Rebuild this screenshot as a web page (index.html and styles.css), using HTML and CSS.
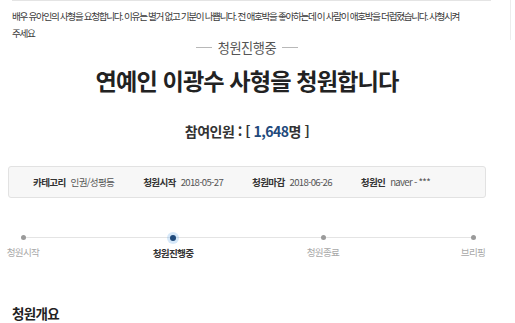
FILE: index.html
```html
<!DOCTYPE html>
<html lang="ko">
<head>
<meta charset="utf-8">
<link rel="stylesheet" href="styles.css">
</head>
<body>
<div class="top">
  <div class="desc">
    <p>배우 유아인의 사형을 요청합니다. 이유는 별거 없고 기분이 나쁩니다. 전 애호박을 좋아하는데 이 사람이 애호박을 더럽혔습니다. 사형시켜</p>
    <p>주세요</p>
  </div>
  <div class="side"></div>
</div>
<div class="main">
  <div class="status"><span class="dash"></span><span>청원진행중</span><span class="dash"></span></div>
  <h1 class="title">연예인 이광수 사형을 청원합니다</h1>
  <div class="count">참여인원 : [ <span class="num">1,648</span>명 ]</div>
  <div class="info">
    <div class="item"><b>카테고리</b><span>인권/성평등</span></div>
    <div class="item"><b>청원시작</b><span>2018-05-27</span></div>
    <div class="item"><b>청원마감</b><span>2018-06-26</span></div>
    <div class="item"><b>청원인</b><span>naver - ***</span></div>
  </div>
  <div class="progress">
    <div class="step"><i class="dot"></i><span>청원시작</span></div>
    <div class="step active"><i class="dot"></i><span>청원진행중</span></div>
    <div class="step"><i class="dot"></i><span>청원종료</span></div>
    <div class="step"><i class="dot"></i><span>브리핑</span></div>
  </div>
  <h2 class="section">청원개요</h2>
</div>
</body>
</html>
```
FILE: styles.css
```css
* { box-sizing: border-box; }
html, body { margin: 0; padding: 0; background: #fff; }
body {
  font-family: "Noto Sans CJK KR", "Noto Sans", sans-serif;
  color: #333;
  width: 515px;
  height: 323px;
  overflow: hidden;
}
.top { display: flex; height: 40px; }
.desc {
  width: 479px;
  margin-left: 12px;
  border-top: 1px solid #e4e4e4;
  padding-top: 7px;
}
.desc p {
  margin: 0;
  font-size: 9.6px;
  line-height: 17px;
  letter-spacing: -1.31px;
  color: #3a3a3a;
  white-space: nowrap;
}
.side {
  margin-left: auto;
  margin-right: 4px;
  width: 1px;
  background: #ececec;
}
.main { width: 494px; }
.status {
  display: flex;
  justify-content: center;
  align-items: center;
  gap: 6px;
  height: 16px;
  margin-top: -1px;
  font-size: 13.2px;
  color: #555;
  letter-spacing: -0.4px;
}
.status .dash { width: 16px; height: 1px; background: #b8b8b8; }
.title {
  margin: 9px 0 0;
  text-align: center;
  font-size: 23.2px;
  line-height: 32px;
  font-weight: 700;
  color: #222;
  letter-spacing: -0.9px;
}
.count {
  margin-top: 26px;
  text-align: center;
  font-size: 14px;
  line-height: 18px;
  font-weight: 700;
  color: #333;
  letter-spacing: -0.5px;
}
.count .num { color: #1f4a7c; }
.info {
  margin: 26px 0 0 8px;
  width: 478px;
  height: 32px;
  background: #f7f7f7;
  border: 1px solid #e2e2e2;
  border-radius: 3px;
  display: flex;
  align-items: center;
  gap: 29px;
  padding-left: 24px;
  font-size: 9.6px;
  letter-spacing: -0.7px;
}
.item { display: flex; align-items: center; gap: 5px; }
.item b { font-weight: 700; color: #333; }
.item span { color: #555; }
.progress {
  position: relative;
  margin: 34px 0 0 5px;
  width: 486px;
  display: flex;
  justify-content: space-between;
}
.progress::before {
  content: "";
  position: absolute;
  left: 18px;
  right: 18px;
  top: 5px;
  height: 1px;
  background: #e4e4e4;
}
.step {
  position: relative;
  width: 36px;
  display: flex;
  flex-direction: column;
  align-items: center;
  white-space: nowrap;
}
.dot {
  display: block;
  width: 5px;
  height: 5px;
  margin-top: 3px;
  border-radius: 50%;
  background: #9a9a9a;
}
.step.active .dot {
  width: 6px;
  height: 6px;
  margin-top: 2.5px;
  background: #1f4a7c;
  box-shadow: 0 0 0 3px rgba(120, 180, 235, 0.3);
}
.step span {
  margin-top: 5px;
  font-size: 9.6px;
  line-height: 14px;
  color: #a8a8a8;
  letter-spacing: -0.7px;
}
.step.active span { color: #333; font-weight: 700; }
.section {
  margin: 45px 0 0 12px;
  font-size: 13.5px;
  line-height: 16px;
  font-weight: 700;
  color: #222;
  letter-spacing: -0.7px;
}
```
